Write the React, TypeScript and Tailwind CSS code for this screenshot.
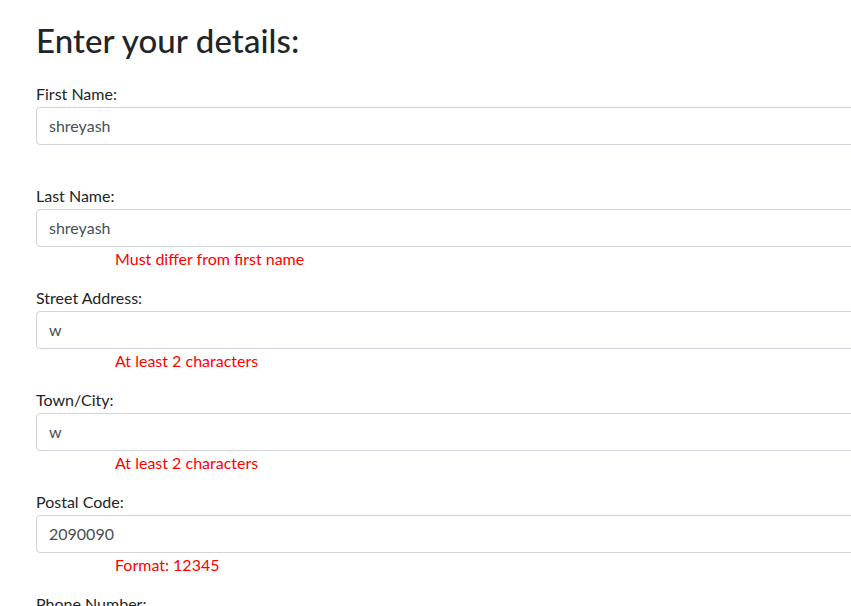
type Field = { label: string; value: string; error?: string };

const fields: Field[] = [
  { label: "First Name:", value: "shreyash" },
  { label: "Last Name:", value: "shreyash", error: "Must differ from first name" },
  { label: "Street Address:", value: "w", error: "At least 2 characters" },
  { label: "Town/City:", value: "w", error: "At least 2 characters" },
  { label: "Postal Code:", value: "2090090", error: "Format: 12345" },
  { label: "Phone Number:", value: "" },
];

export default function App() {
  return (
    <div
      className="w-[851px] h-[606px] overflow-hidden bg-white text-[#212529]"
      style={{ fontFamily: "Lato, 'Noto Sans', sans-serif" }}
    >
      <div className="w-[1100px] pl-[36px] pt-[21px]">
        <h2 className="text-[33px] font-medium leading-[1.2] mb-[21px] tracking-[0.1px]">Enter your details:</h2>
        <form className="flex flex-col">
          {fields.map((f) => (
            <div key={f.label} className="mb-[16px] flex flex-col">
              <label className="text-[16px] leading-[24px] block mb-[1px]">{f.label}</label>
              <input
                readOnly
                value={f.value}
                className="h-[38px] w-full rounded-[4px] border border-[#ced4da] px-[12px] py-[6px] text-[16px] text-[#495057] outline-none bg-white"
                style={{ fontFamily: "Lato, 'Noto Sans', sans-serif" }}
              />
              <div className="h-[23px] pl-[79px] text-[16px] leading-[24px] text-[#ff0000]">{f.error ?? ""}</div>
            </div>
          ))}
        </form>
      </div>
    </div>
  );
}
